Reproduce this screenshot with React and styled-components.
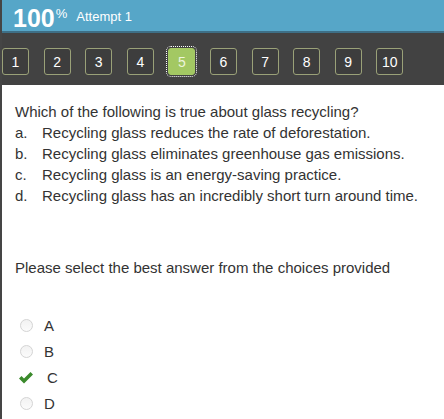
import styled, { createGlobalStyle } from 'styled-components';

const GlobalStyle = createGlobalStyle`
    html, body {
        margin: 0;
        padding: 0;
        background: #ffffff;
    }
    body {
        font-family: 'Liberation Sans', Arial, sans-serif;
    }
`

const Page = styled.div`
    width: 444px;
    height: 419px;
    border-left: 2px solid #454545;
    box-sizing: border-box;
    overflow: hidden;
`
const Header = styled.div`
    display: flex;
    align-items: center;
    height: 31px;
    padding-left: 11px;
    background-color: #56a6c8;
    border-bottom: 2px solid #3e6f86;
    color: #ffffff;
`
const Score = styled.span`
    font-size: 25px;
    font-weight: bold;
    line-height: 31px;

    sup {
        font-size: 13px;
        font-weight: normal;
        vertical-align: 9px;
        margin-left: 1px;
    }
`
const Attempt = styled.span`
    font-size: 13px;
    margin-left: 9px;
    margin-top: 1px;
`
const Nav = styled.div`
    display: flex;
    gap: 14.6px;
    height: 52px;
    padding-top: 15px;
    box-sizing: border-box;
    background-color: #424242;
`
const NavButton = styled.div`
    width: 27px;
    height: 27px;
    box-sizing: border-box;
    display: flex;
    justify-content: center;
    align-items: center;
    border: 1px solid ${p => p.$active ? '#a3c863' : '#9aa178'};
    border-radius: 3px;
    background-color: ${p => p.$active ? '#a3c863' : '#3d3d3d'};
    color: ${p => p.$active ? '#eef5dc' : '#ffffff'};
    font-size: 14px;
    outline: ${p => p.$active ? '1px dotted #ffffff' : 'none'};
    outline-offset: 1px;
`
const Content = styled.div`
    padding: 16px 0 0 13px;
    color: #333333;
    font-size: 15px;
`
const Question = styled.div`
    line-height: 21px;
`
const Choice = styled.div`
    display: flex;
    line-height: 21px;

    span:first-child {
        width: 27px;
    }
`
const Prompt = styled.div`
    margin-top: 51px;
    line-height: 21px;
`
const Options = styled.div`
    display: flex;
    flex-direction: column;
    gap: 5px;
    margin-top: 37px;
    padding-left: 5px;
`
const Option = styled.div`
    display: flex;
    align-items: center;
    height: 21px;
    font-size: 15px;
`
const Radio = styled.span`
    width: 11px;
    height: 11px;
    border-radius: 50%;
    border: 1px solid #d4d4d4;
    background: linear-gradient(#f2f2f2, #fbfbfb);
    margin-right: 11px;
`
const Check = styled.svg`
    width: 16px;
    height: 13px;
    margin-left: -2px;
    margin-right: 13px;
`

const pages = [1, 2, 3, 4, 5, 6, 7, 8, 9, 10]

function App() {
    return (
        <Page>
            <GlobalStyle />
            <Header>
                <Score>100<sup>%</sup></Score>
                <Attempt>Attempt 1</Attempt>
            </Header>
            <Nav>
                {pages.map(n => (
                    <NavButton key={n} $active={n === 5}>{n}</NavButton>
                ))}
            </Nav>
            <Content>
                <Question>Which of the following is true about glass recycling?</Question>
                <Choice><span>a.</span><span>Recycling glass reduces the rate of deforestation.</span></Choice>
                <Choice><span>b.</span><span>Recycling glass eliminates greenhouse gas emissions.</span></Choice>
                <Choice><span>c.</span><span>Recycling glass is an energy-saving practice.</span></Choice>
                <Choice><span>d.</span><span>Recycling glass has an incredibly short turn around time.</span></Choice>
                <Prompt>Please select the best answer from the choices provided</Prompt>
                <Options>
                    <Option><Radio />A</Option>
                    <Option><Radio />B</Option>
                    <Option>
                        <Check viewBox="0 0 16 13">
                            <path d="M1 7.5 L3.5 5 L6 7.5 L12.5 1 L15 3.5 L6 12.5 Z" fill="#3b8a2c" />
                        </Check>
                        C
                    </Option>
                    <Option><Radio />D</Option>
                </Options>
            </Content>
        </Page>
    )
}

export default App
